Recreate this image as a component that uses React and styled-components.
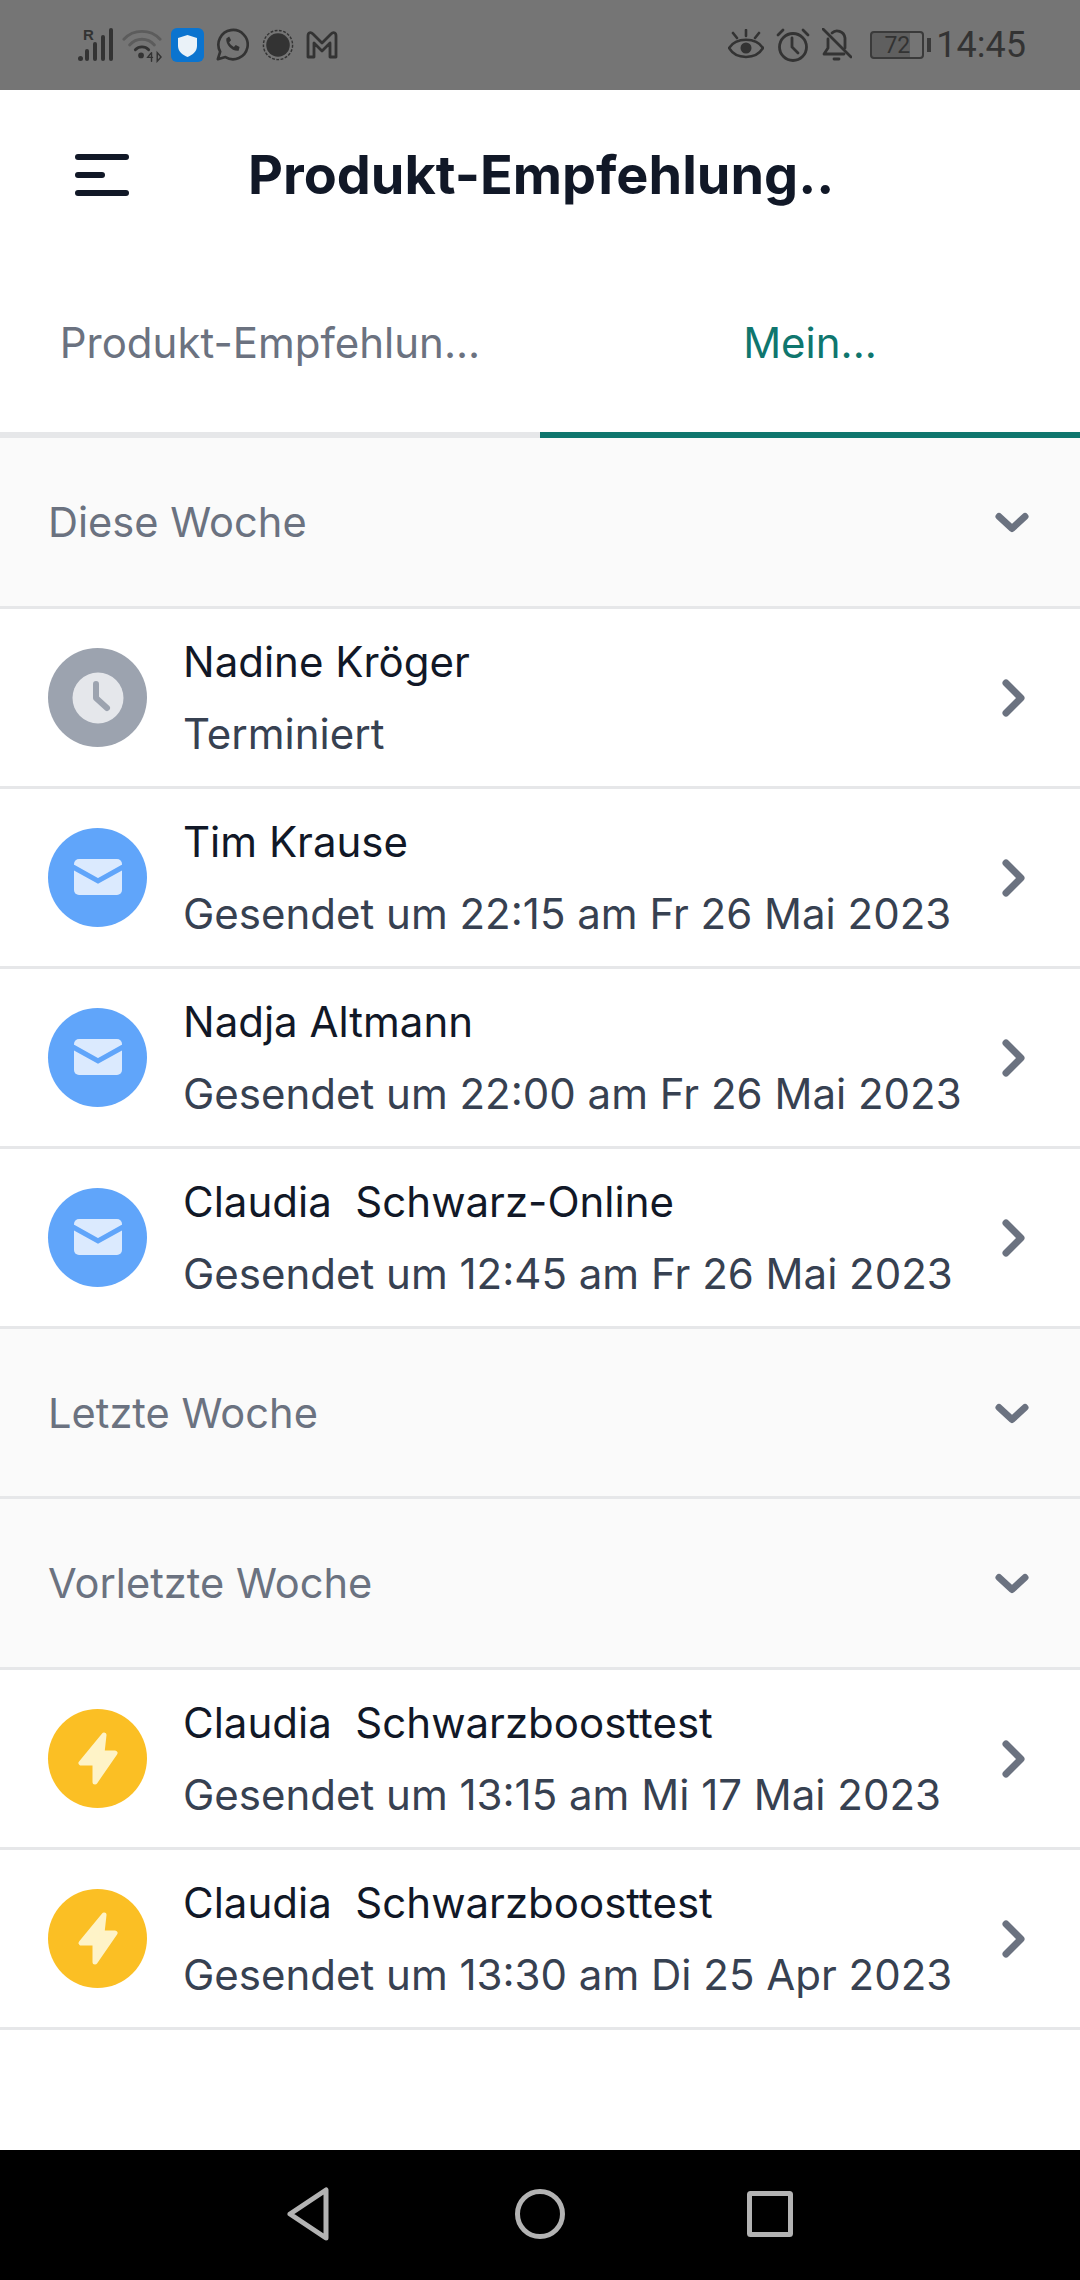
import React from "react";
import styled, {createGlobalStyle} from "styled-components";

const GlobalStyle = createGlobalStyle`
    html, body {
        margin: 0;
        padding: 0;
        background: #fff;
    }
    * {
        box-sizing: border-box;
    }
`;

const Page = styled.div`
    width: 1080px;
    height: 2280px;
    display: flex;
    flex-direction: column;
    background: #fff;
    font-family: Inter, "Liberation Sans", sans-serif;
    overflow: hidden;
`;

const StatusBar = styled.div`
    height: 90px;
    flex: none;
    background: #757575;
    display: flex;
    align-items: center;
    justify-content: space-between;
    padding: 0 54px 0 78px;
    color: #333;
`;

const StatusGroup = styled.div`
    display: flex;
    align-items: center;
    gap: ${props => props.$gap}px;
`;

const Glyph = styled.svg`
    flex: none;
    margin-left: ${props => props.$left || 0}px;
`;

const Clock = styled.span`
    font-family: Roboto, sans-serif;
    font-size: 36px;
    margin-left: -8px;
    color: #333;
`;

const Battery = styled.div`
    width: 54px;
    height: 28px;
    border: 2px solid #3a3a3a;
    border-radius: 4px;
    position: relative;
    display: flex;
    align-items: center;
    justify-content: center;
    font-family: Roboto, sans-serif;
    font-size: 23px;
    color: #333;
    margin: 0 8px 0 6px;
    background: linear-gradient(to right, #5f5f5f 0 76%, transparent 76%);

    &::after {
        content: "";
        position: absolute;
        right: -9px;
        top: 5px;
        width: 4px;
        height: 14px;
        background: #3a3a3a;
    }
`;

const Header = styled.header`
    height: 170px;
    flex: none;
    display: flex;
    align-items: center;
    padding: 0 0 0 75px;
`;

const MenuButton = styled.div`
    width: 54px;
    display: flex;
    flex-direction: column;
    gap: 12px;
    margin-right: 119px;
`;

const MenuBar = styled.span`
    display: block;
    height: 6px;
    width: ${props => props.$short ? 30 : 54}px;
    background: #111827;
    border-radius: 3px;
`;

const Title = styled.h1`
    margin: 0;
    width: 584px;
    font-size: 54px;
    line-height: 64px;
    font-weight: 700;
    color: #111827;
    white-space: nowrap;
    overflow: hidden;
`;

const Tabs = styled.div`
    height: 178px;
    flex: none;
    display: flex;
`;

const Tab = styled.div`
    width: 540px;
    display: flex;
    justify-content: center;
    align-items: center;
    padding-bottom: 8px;
    font-size: 42px;
    font-weight: 400;
    color: ${props => props.$active ? "#0f766e" : "#6b7280"};
    border-bottom: 6px solid ${props => props.$active ? "#0f766e" : "#e6e7e9"};
`;

const SectionHead = styled.div`
    height: ${props => props.$height}px;
    display: flex;
    align-items: center;
    justify-content: space-between;
    padding: 0 50px 0 48px;
    background: #fafafa;
    border-bottom: 3px solid #e6e7e9;
    font-size: 41.6px;
    color: #6b7280;
`;

const Row = styled.div`
    height: 180px;
    display: flex;
    align-items: center;
    padding: 0 54px 0 48px;
    border-bottom: 3px solid #e6e7e9;
    background: #fff;
`;

const Badge = styled.div`
    width: 99px;
    height: 99px;
    flex: none;
    border-radius: 50%;
    background: ${props => props.$color};
    display: flex;
    align-items: center;
    justify-content: center;
    margin-right: 36px;
`;

const RowText = styled.div`
    flex: 1;
    display: flex;
    flex-direction: column;
    gap: 16px;
    font-size: 42px;
    line-height: 56px;
    white-space: pre;
`;

const Name = styled.div`
    color: #111827;
`;

const Sub = styled.div`
    color: #374151;
`;

const Main = styled.main`
    flex: 1;
`;

const NavBar = styled.nav`
    height: 130px;
    flex: none;
    background: #000;
    display: flex;
    align-items: center;
    justify-content: center;
    gap: 184px;
    padding-bottom: 2px;
`;

function ChevronDown() {
    return (
        <svg width="36" height="22" viewBox="0 0 36 22" fill="none">
            <path d="M5 5.5 L18 17.5 L31 5.5" stroke="#6b7280" strokeWidth="7" strokeLinecap="round" strokeLinejoin="round"/>
        </svg>
    );
}

function ChevronRight() {
    return (
        <svg width="24" height="38" viewBox="0 0 24 38" fill="none">
            <path d="M4 4 L19 19 L4 34" stroke="#6b7280" strokeWidth="7" strokeLinecap="round" strokeLinejoin="round"/>
        </svg>
    );
}

function ClockIcon() {
    return (
        <svg width="52" height="52" viewBox="0 0 52 52">
            <circle cx="26" cy="26" r="25.5" fill="#e5e7eb"/>
            <path d="M24 12 V26 L35 36" fill="none" stroke="#9ca3af" strokeWidth="6" strokeLinecap="round" strokeLinejoin="round"/>
        </svg>
    );
}

function MailIcon() {
    return (
        <svg width="48" height="38" viewBox="0 0 48 38">
            <rect x="0" y="0" width="48" height="36" rx="5" fill="#dbeafe"/>
            <path d="M-1 8 L24 22 L49 8" fill="none" stroke="#60a5fa" strokeWidth="5"/>
        </svg>
    );
}

function BoltIcon() {
    return (
        <svg width="44" height="58" viewBox="0 0 44 58">
            <path d="M28 5 L5 33 H19 L19 52 L39 23 H26 Z" fill="#fef3c7" stroke="#fef3c7" strokeWidth="5" strokeLinejoin="round"/>
        </svg>
    );
}

const badges = {
    clock: {color: "#9ca3af", icon: <ClockIcon/>},
    mail: {color: "#60a5fa", icon: <MailIcon/>},
    bolt: {color: "#fbbf24", icon: <BoltIcon/>},
};

function Entry({type, name, sub}) {
    return (
        <Row>
            <Badge $color={badges[type].color}>{badges[type].icon}</Badge>
            <RowText>
                <Name>{name}</Name>
                <Sub>{sub}</Sub>
            </RowText>
            <ChevronRight/>
        </Row>
    );
}

function Section({title, height}) {
    return (
        <SectionHead $height={height}>
            <span>{title}</span>
            <ChevronDown/>
        </SectionHead>
    );
}

function LeftStatusIcons() {
    return (
        <StatusGroup $gap={8}>
            <Glyph width="36" height="36" viewBox="0 0 36 36" fill="#333">
                <circle cx="2.5" cy="31.5" r="2.5"/>
                <rect x="7" y="22" width="4" height="12" rx="2"/>
                <rect x="15" y="15" width="4" height="19" rx="2"/>
                <rect x="23" y="8" width="4" height="26" rx="2"/>
                <rect x="31" y="1" width="4" height="33" rx="2"/>
                <text x="5" y="13" fontFamily="'Liberation Sans', sans-serif" fontSize="15" fontWeight="700" fill="#333">R</text>
            </Glyph>
            <Glyph width="40" height="36" viewBox="0 0 42 36" fill="none" stroke="#5c5c5c" strokeWidth="3" strokeLinecap="round">
                <path d="M2 12 C12 1 30 1 40 12"/>
                <path d="M8 18 C15 10 27 10 34 18"/>
                <path d="M14 23 C18 19 24 19 28 23" stroke="#333"/>
                <circle cx="20" cy="29" r="3" fill="#333" stroke="none"/>
                <path d="M30 27 l-3 4 h5 M31 26 v9 M37 26 v9 l4 -4.5 z" stroke="#333" strokeWidth="1.5"/>
            </Glyph>
            <Glyph width="33" height="36" viewBox="0 0 33 36" $left={1}>
                <rect x="0" y="1" width="33" height="34" rx="6" fill="#0b74cf"/>
                <path d="M16.5 8 L26 11 V19 C26 25 21 28 16.5 30 C12 28 7 25 7 19 V11 Z" fill="#eaf2f8"/>
            </Glyph>
            <Glyph width="34" height="36" viewBox="0 0 36 36" fill="none" $left={3}>
                <path d="M3 33 L5.5 25 A15.5 15.5 0 1 1 11 30.8 Z" stroke="#333" strokeWidth="2.8" strokeLinejoin="round"/>
                <path d="M12 11 C11 17 18 25 25 24 L26 20 L22 18 L20 20 C18 19 16 17 15 15 L17 13 L15 9 Z" fill="#333"/>
            </Glyph>
            <Glyph width="32" height="32" viewBox="0 0 34 34" $left={5}>
                <circle cx="17" cy="17" r="12.5" fill="#333"/>
                <circle cx="17" cy="17" r="15.5" fill="none" stroke="#333" strokeWidth="1.5" strokeDasharray="3 1.6"/>
            </Glyph>
            <Glyph width="34" height="30" viewBox="0 0 34 30" fill="none" $left={3}>
                <path d="M3 27 V6 C3 2 6 2 8 4 L17 13 L26 4 C28 2 31 2 31 6 V27 H25 V13 L17 21 L9 13 V27 Z" stroke="#333" strokeWidth="2.8" strokeLinejoin="round"/>
            </Glyph>
        </StatusGroup>
    );
}

function RightStatusIcons() {
    return (
        <StatusGroup $gap={12}>
            <Glyph width="36" height="32" viewBox="0 0 36 32" fill="none" stroke="#333" strokeWidth="2.6" strokeLinecap="round">
                <path d="M1 19 C8 8 28 8 35 19 C28 31 8 31 1 19 Z"/>
                <circle cx="18" cy="19" r="5.5" fill="#333" stroke="none"/>
                <path d="M18 1 V7 M5 4 L9 9 M31 4 L27 9"/>
            </Glyph>
            <Glyph width="34" height="34" viewBox="0 0 34 34" fill="none" stroke="#333" strokeWidth="2.8" strokeLinecap="round">
                <circle cx="17" cy="19" r="13.5"/>
                <path d="M16 10 V19 L22 25 M2 7 L7 2 M32 7 L27 2"/>
            </Glyph>
            <Glyph width="30" height="34" viewBox="0 0 30 34" fill="none" stroke="#333" strokeWidth="2.8" strokeLinecap="round" strokeLinejoin="round">
                <path d="M1 1 L29 29"/>
                <path d="M10 5 C14 1 22 3 23 10 V20 M6 11 V20 L2 26 H22"/>
                <path d="M12 31 H17"/>
            </Glyph>
            <Battery>72</Battery>
            <Clock>14:45</Clock>
        </StatusGroup>
    );
}

export default function App() {
    return (
        <Page>
            <GlobalStyle/>
            <StatusBar>
                <LeftStatusIcons/>
                <RightStatusIcons/>
            </StatusBar>
            <Header>
                <MenuButton>
                    <MenuBar/>
                    <MenuBar $short/>
                    <MenuBar/>
                </MenuButton>
                <Title>Produkt-Empfehlung...</Title>
            </Header>
            <Tabs>
                <Tab>Produkt-Empfehlun...</Tab>
                <Tab $active>Mein...</Tab>
            </Tabs>
            <Main>
                <Section title="Diese Woche" height={171}/>
                <Entry type="clock" name="Nadine Kröger" sub="Terminiert"/>
                <Entry type="mail" name="Tim Krause" sub="Gesendet um 22:15 am Fr 26 Mai 2023"/>
                <Entry type="mail" name="Nadja Altmann" sub="Gesendet um 22:00 am Fr 26 Mai 2023"/>
                <Entry type="mail" name="Claudia  Schwarz-Online" sub="Gesendet um 12:45 am Fr 26 Mai 2023"/>
                <Section title="Letzte Woche" height={170}/>
                <Section title="Vorletzte Woche" height={171}/>
                <Entry type="bolt" name="Claudia  Schwarzboosttest" sub="Gesendet um 13:15 am Mi 17 Mai 2023"/>
                <Entry type="bolt" name="Claudia  Schwarzboosttest" sub="Gesendet um 13:30 am Di 25 Apr 2023"/>
            </Main>
            <NavBar>
                <Glyph width="42" height="54" viewBox="0 0 42 54" fill="none" stroke="#b3b3b3" strokeWidth="5" strokeLinejoin="round">
                    <path d="M3 27 L39 3 V51 Z"/>
                </Glyph>
                <Glyph width="50" height="50" viewBox="0 0 50 50" fill="none" stroke="#b3b3b3" strokeWidth="5" $left={2}>
                    <circle cx="25" cy="25" r="22.5"/>
                </Glyph>
                <Glyph width="46" height="46" viewBox="0 0 46 46" fill="none" stroke="#b3b3b3" strokeWidth="5" strokeLinejoin="round" $left={-2}>
                    <rect x="2.5" y="2.5" width="41" height="41" rx="1"/>
                </Glyph>
            </NavBar>
        </Page>
    );
}
